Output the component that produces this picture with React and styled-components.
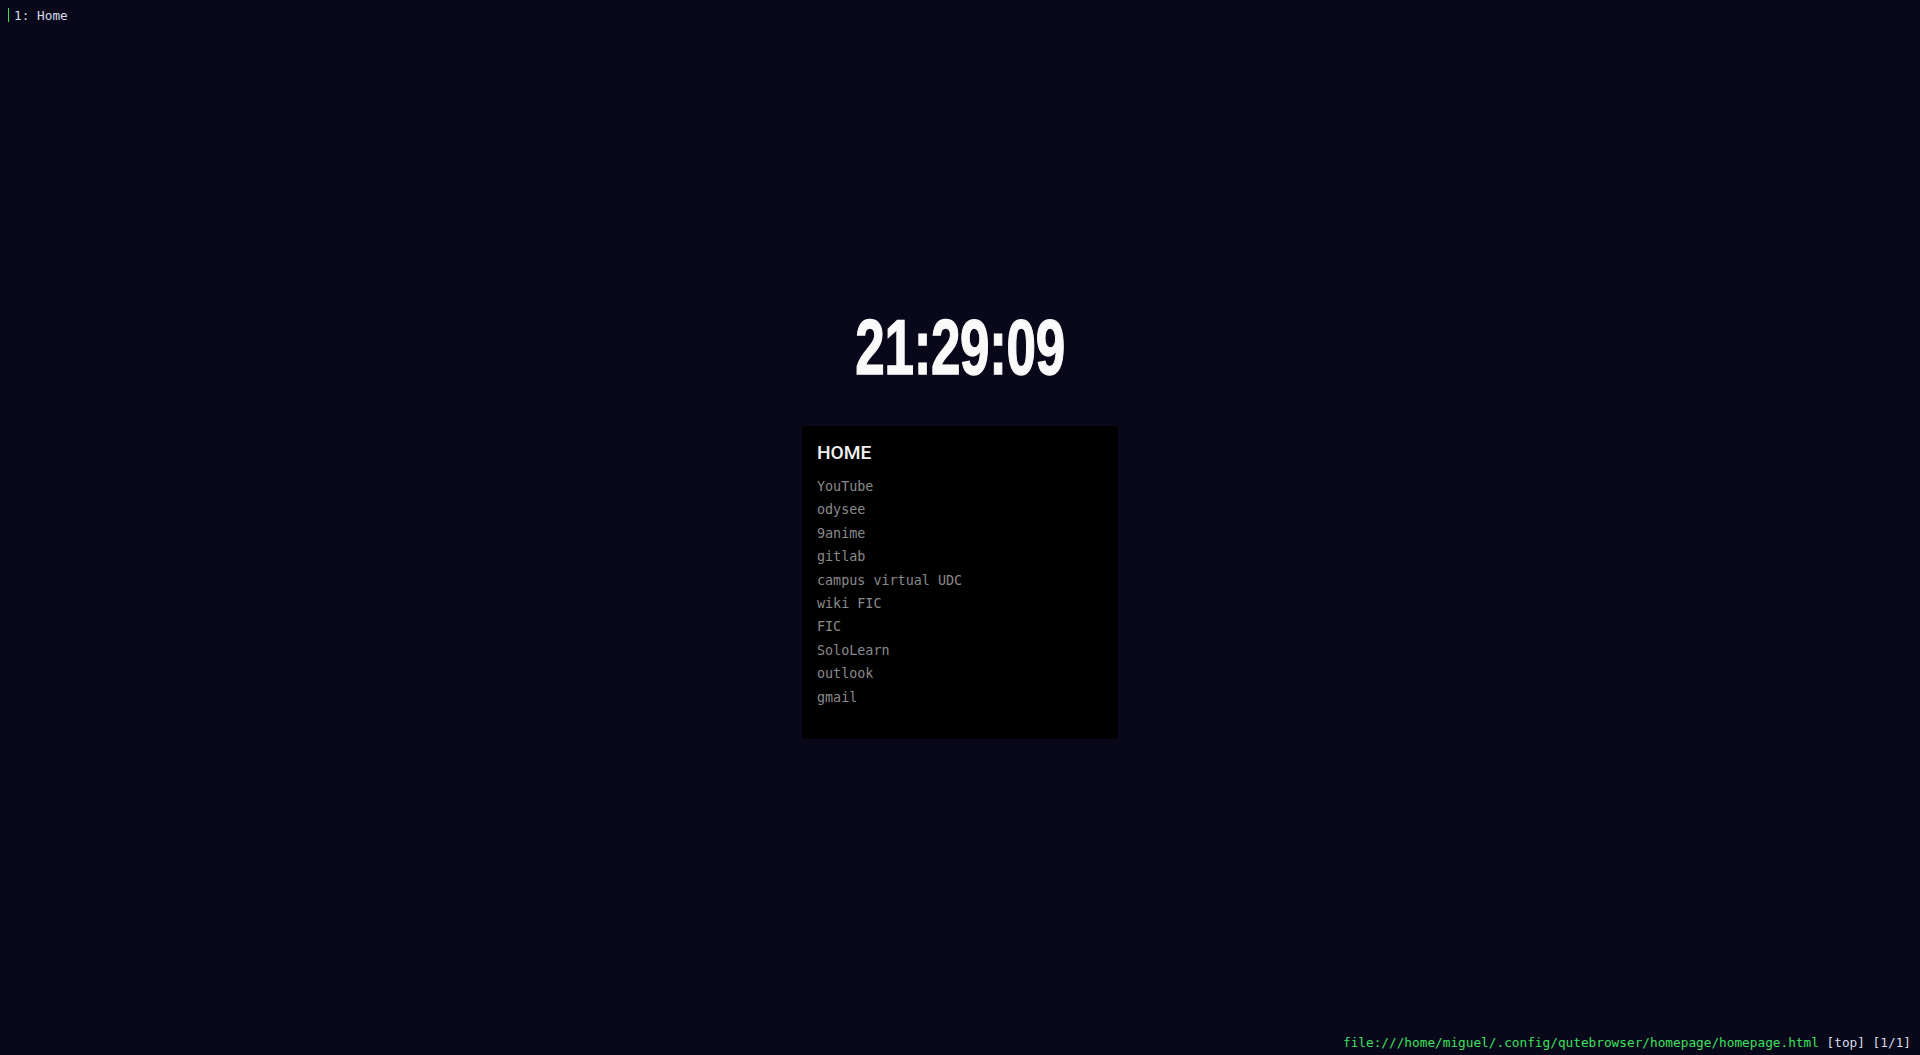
import styled, { createGlobalStyle } from "styled-components";

const GlobalStyle = createGlobalStyle`
  html, body {
    margin: 0;
    padding: 0;
    background: #08081a;
  }
  body {
    font-family: "DejaVu Sans Mono", monospace;
  }
`;

const Page = styled.div`
  display: flex;
  flex-direction: column;
  height: 100vh;
  background: #08081a;
  overflow: hidden;
`;

const TabBar = styled.div`
  display: flex;
  align-items: center;
  height: 30px;
  padding-left: 8px;
  font-family: "DejaVu Sans Mono", monospace;
  font-size: 12.75px;
  color: #d6dcea;
`;

const TabIndicator = styled.span`
  width: 1px;
  height: 14px;
  margin-right: 5px;
  background: #3cdc5c;
`;

const Main = styled.main`
  flex: 1;
  display: flex;
  flex-direction: column;
  align-items: center;
  justify-content: center;
  padding-bottom: 15px;
`;

const Clock = styled.div`
  font-family: "Liberation Sans", Arial, sans-serif;
  font-weight: 700;
  font-size: 78px;
  line-height: 1;
  color: #fafafa;
  -webkit-text-stroke: 1.4px #fafafa;
  transform: scaleX(0.68);
  margin-bottom: 40px;
  letter-spacing: -0.5px;
`;

const Card = styled.section`
  width: 316px;
  box-sizing: border-box;
  padding: 15px 15px 30px;
  background: #000;
  border-radius: 3px;
`;

const Heading = styled.h2`
  margin: 0 0 11px;
  font-family: Roboto, "Noto Sans", sans-serif;
  font-weight: 500;
  font-size: 19.2px;
  line-height: normal;
  color: #f0f0f0;
`;

const LinkList = styled.ul`
  list-style: none;
  margin: 0;
  padding: 0;
`;

const LinkItem = styled.li`
  font-family: "DejaVu Sans Mono", monospace;
  font-size: 13.4px;
  line-height: 23.45px;
  color: #8a8a8a;
`;

const StatusBar = styled.footer`
  display: flex;
  justify-content: flex-end;
  box-sizing: border-box;
  height: 23px;
  padding: 3px 9px 0 0;
  font-family: "DejaVu Sans Mono", monospace;
  font-size: 12.75px;
  white-space: pre;
`;

const Url = styled.span`
  color: #3ee05e;
`;

const Info = styled.span`
  color: #d6dcea;
`;

const links = [
  "YouTube",
  "odysee",
  "9anime",
  "gitlab",
  "campus virtual UDC",
  "wiki FIC",
  "FIC",
  "SoloLearn",
  "outlook",
  "gmail",
];

export default function App() {
  return (
    <Page>
      <GlobalStyle />
      <TabBar>
        <TabIndicator />
        <span>1: Home</span>
      </TabBar>
      <Main>
        <Clock>21:29:09</Clock>
        <Card>
          <Heading>HOME</Heading>
          <LinkList>
            {links.map((l) => (
              <LinkItem key={l}>{l}</LinkItem>
            ))}
          </LinkList>
        </Card>
      </Main>
      <StatusBar>
        <Url>file:///home/miguel/.config/qutebrowser/homepage/homepage.html</Url>
        <Info> [top] [1/1]</Info>
      </StatusBar>
    </Page>
  );
}
